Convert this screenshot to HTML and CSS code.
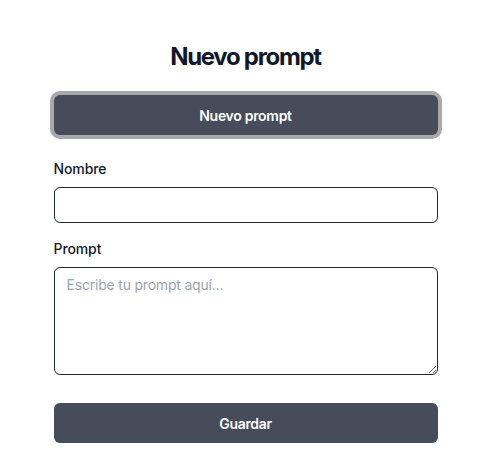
FILE: index.html
```html
<!DOCTYPE html>
<html lang="es">
<head>
<meta charset="utf-8">
<title>Nuevo prompt</title>
<link rel="stylesheet" href="styles.css">
</head>
<body>
<main class="page">
  <h1 class="title">Nuevo prompt</h1>
  <button class="btn btn-focus" type="button">Nuevo prompt</button>
  <form class="form">
    <div class="field">
      <label class="label" for="nombre">Nombre</label>
      <input class="input" id="nombre" type="text">
    </div>
    <div class="field">
      <label class="label" for="prompt">Prompt</label>
      <textarea class="textarea" id="prompt" placeholder="Escribe tu prompt aquí..."></textarea>
    </div>
    <button class="btn btn-save" type="button">Guardar</button>
  </form>
</main>
</body>
</html>
```

FILE: styles.css
```css
* { box-sizing: border-box; }
html, body { margin: 0; padding: 0; background: #ffffff; }
body {
  font-family: Inter, "Noto Sans", sans-serif;
  color: #111827;
}
.page {
  width: 384px;
  margin: 0 auto;
  padding-top: 41px;
  display: flex;
  flex-direction: column;
}
.title {
  margin: 0;
  font-size: 24px;
  line-height: 32px;
  font-weight: 700;
  text-align: center;
  letter-spacing: -1.3px;
  color: #111827;
}
.btn {
  display: block;
  width: 100%;
  height: 40px;
  border: none;
  border-radius: 6px;
  background: #464c59;
  color: #ffffff;
  font-family: Inter, "Noto Sans", sans-serif;
  font-size: 14px;
  font-weight: 600;
  letter-spacing: -0.3px;
  cursor: pointer;
}
.btn-focus {
  margin-top: 22px;
  box-shadow: 0 0 0 4px #a9a9a9;
}
.form {
  margin-top: 24px;
  display: flex;
  flex-direction: column;
  gap: 16px;
}
.field {
  display: flex;
  flex-direction: column;
  gap: 8px;
}
.label {
  font-size: 14px;
  line-height: 20px;
  font-weight: 500;
  letter-spacing: -0.1px;
  color: #111827;
}
.input, .textarea {
  width: 100%;
  border: 1px solid #1f2430;
  border-radius: 6px;
  background: #ffffff;
  font-family: Inter, "Noto Sans", sans-serif;
  font-size: 14px;
  color: #111827;
  outline: none;
}
.input {
  height: 36px;
  padding: 0 12px;
}
.textarea {
  height: 108px;
  padding: 7px 12px;
  line-height: 20px;
  letter-spacing: -0.2px;
  resize: vertical;
}
.textarea::placeholder { color: #9ca3af; }
.btn-save {
  margin-top: 12px;
}
```
